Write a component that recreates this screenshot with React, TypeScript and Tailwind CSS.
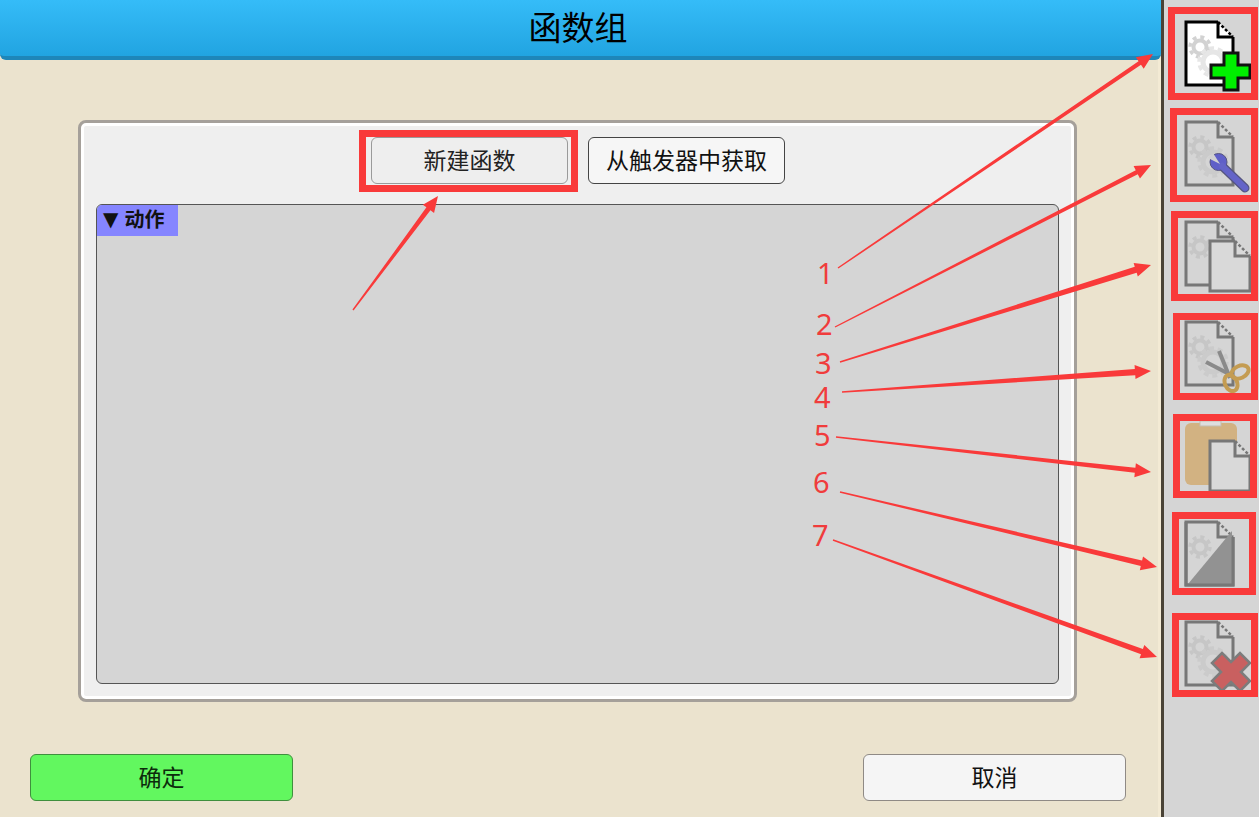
const FONT = "font-['Noto_Sans_CJK_SC','Noto_Sans',sans-serif]";

// annotation arrows: thin at the tail, thick near the head
function arrowPoints(x1: number, y1: number, x2: number, y2: number, shaft: number, head = 7, len = 16) {
  const d = Math.hypot(x2 - x1, y2 - y1);
  const ux = (x2 - x1) / d;
  const uy = (y2 - y1) / d;
  const nx = -uy;
  const ny = ux;
  const bx = x2 - ux * len;
  const by = y2 - uy * len;
  const tail = 0.7;
  const pts = [
    [x1 + nx * tail, y1 + ny * tail],
    [bx + nx * shaft, by + ny * shaft],
    [bx + nx * head, by + ny * head],
    [x2, y2],
    [bx - nx * head, by - ny * head],
    [bx - nx * shaft, by - ny * shaft],
    [x1 - nx * tail, y1 - ny * tail],
  ];
  return pts.map((p) => p.join(",")).join(" ");
}

const arrows = [
  [353, 310, 438, 196, 2.5],
  [838, 268, 1153, 54, 2.2],
  [835, 327, 1151, 165, 2.2],
  [840, 362, 1151, 265, 3.2],
  [842, 392, 1151, 371, 3.2],
  [836, 437, 1151, 472, 2.6],
  [840, 492, 1157, 567, 2.8],
  [833, 540, 1157, 657, 2.8],
];

const numbers = [
  { n: "1", cls: "left-[817px] top-[258px]" },
  { n: "2", cls: "left-[816px] top-[309px]" },
  { n: "3", cls: "left-[815px] top-[348px]" },
  { n: "4", cls: "left-[814px] top-[382px]" },
  { n: "5", cls: "left-[814px] top-[420px]" },
  { n: "6", cls: "left-[813px] top-[467px]" },
  { n: "7", cls: "left-[812px] top-[520px]" },
];

function Gears({ x, y, big = true, small = "#c6c6c6", large = "#cbcbcb" }: { x: number; y: number; big?: boolean; small?: string; large?: string }) {
  return (
    <g fill="none" className="blur-[0.6px]">
      <g stroke={small}>
        <circle cx={x} cy={y} r="6.5" strokeWidth="4" />
        <circle cx={x} cy={y} r="10" strokeWidth="3.5" strokeDasharray="4 3.85" />
      </g>
      {big && (
        <g stroke={large}>
          <circle cx={x + 13} cy={y + 15} r="10" strokeWidth="5" />
          <circle cx={x + 13} cy={y + 15} r="14" strokeWidth="3.5" strokeDasharray="5 3.8" />
        </g>
      )}
    </g>
  );
}

function Doc({ x, y, w = 47, h = 63, color = "#777777", fill = "none" }: { x: number; y: number; w?: number; h?: number; color?: string; fill?: string }) {
  const f = 15;
  return (
    <g fill="none" stroke={color} strokeWidth="3">
      <path d={`M${x} ${y}H${x + w - f}L${x + w} ${y + f}V${y + h}H${x}Z`} fill={fill} stroke="none" />
      <path d={`M${x + w - f} ${y}H${x}V${y + h}H${x + w}V${y + f}`} />
      <path d={`M${x + w - f} ${y}V${y + f}H${x + w}`} fill={fill === "none" ? "#d5d5d5" : fill} />
      <path d={`M${x + w - f} ${y}L${x + w} ${y + f}`} strokeWidth="2.5" strokeDasharray="3 2" />
    </g>
  );
}

function IconNew() {
  return (
    <>
      <Doc x={1186} y={22} color="#000000" fill="#ffffff" />
      <Gears x={1200} y={47} small="#d2d2d2" large="#e6e6e6" />
      <path
        d="M1224 53H1238V65H1250V78H1238V90H1224V78H1211V65H1224Z"
        fill="#00f000"
        stroke="#111111"
        strokeWidth="3"
      />
    </>
  );
}

function IconEdit() {
  return (
    <>
      <Doc x={1186} y={122} />
      <Gears x={1200} y={147} />
      <path d="M1222 166L1245 188" fill="none" stroke="#55557f" strokeWidth="9" strokeLinecap="round" />
      <circle cx="1218.5" cy="162" r="8.5" fill="#5f5fc8" stroke="#55557f" strokeWidth="1" />
      <path d="M1222 166L1245 188" fill="none" stroke="#6464c8" strokeWidth="6.5" strokeLinecap="round" />
      <path d="M1220 164L1213 153L1208 158Z" fill="#d0d0d0" />
    </>
  );
}

function IconCopy() {
  return (
    <>
      <Doc x={1186} y={222} />
      <Gears x={1200} y={247} big={false} />
      <Doc x={1210} y={241} w={40} h={50} fill="#d9d9d9" />
    </>
  );
}

function IconCut() {
  return (
    <>
      <Doc x={1186} y={322} />
      <Gears x={1200} y={347} />
      <g fill="none">
        <path d="M1219 351L1230 378" stroke="#8a8a8a" strokeWidth="4" />
        <path d="M1206 362L1231 375" stroke="#8a8a8a" strokeWidth="4" />
        <ellipse cx="1240" cy="372" rx="9" ry="6" stroke="#c49c52" strokeWidth="4" transform="rotate(-25 1240 372)" />
        <ellipse cx="1231" cy="383" rx="6" ry="8.5" stroke="#c49c52" strokeWidth="4" transform="rotate(-25 1231 383)" />
      </g>
    </>
  );
}

function IconPaste() {
  return (
    <>
      <rect x="1185" y="423" width="52" height="62" rx="6" fill="#d2b282" />
      <rect x="1200" y="421" width="21" height="5" fill="#dedede" stroke="#c3bdb0" />
      <Doc x={1210} y={441} w={40} h={50} fill="#d9d9d9" />
    </>
  );
}

function IconHalf() {
  return (
    <>
      <Doc x={1186} y={522} />
      <Gears x={1200} y={547} big={false} />
      <path d="M1188 584L1232 531V584Z" fill="#929292" />
      <path d="M1186 522V585H1233V537" fill="none" stroke="#777777" strokeWidth="3" />
    </>
  );
}

function IconDelete() {
  return (
    <>
      <Doc x={1186} y={622} />
      <Gears x={1200} y={647} />
      <path
        d="M1222 653L1231 662L1240 653L1250 663L1241 672L1250 681L1240 691L1231 682L1222 691L1212 681L1221 672L1212 663Z"
        fill="#c96060"
        stroke="#7c7c7c"
        strokeWidth="2.5"
      />
    </>
  );
}

const tools = [
  { cls: "ml-[4px] w-[90px] h-[93px]", box: "1175 14 76 79", Icon: IconNew },
  { cls: "ml-[6px] mt-[8px] w-[88px] h-[94px]", box: "1177 115 74 80", Icon: IconEdit },
  { cls: "ml-[7px] mt-[9px] w-[87px] h-[90px]", box: "1178 218 73 76", Icon: IconCopy },
  { cls: "ml-[9px] mt-[12px] w-[85px] h-[87px]", box: "1180 320 71 73", Icon: IconCut },
  { cls: "ml-[9px] mt-[14px] w-[84px] h-[84px]", box: "1180 421 70 70", Icon: IconPaste },
  { cls: "ml-[8px] mt-[14px] w-[84px] h-[83px]", box: "1179 519 70 69", Icon: IconHalf },
  { cls: "ml-[8px] mt-[18px] w-[86px] h-[84px]", box: "1179 620 72 70", Icon: IconDelete },
];

export default function App() {
  return (
    <div className={`relative flex h-[817px] w-[1259px] overflow-hidden bg-[#ebe3ce] ${FONT} text-[#111111]`}>
      {/* dialog */}
      <div className="flex w-[1161px] flex-col border-r-[3px] border-[#f3ead4]">
        <div className="-mr-[3px] flex h-[60px] items-center justify-center rounded-b-md border-b-[4px] border-[#1e86b9] bg-gradient-to-b from-[#35bcf8] to-[#21a4e1] pb-[3px] pr-[5px] text-[33px] leading-none text-black">
          函数组
        </div>

        <div className="ml-[78px] mt-[60px] flex h-[582px] w-[999px] flex-col rounded-lg border-[3px] border-[#a5a09a] bg-[#efefef] px-[15px] pt-[14px] shadow-[inset_0_0_0_3px_#ffffff]">
          <div className="flex justify-center gap-[20px] pl-[1px]">
            <div className="relative flex h-[47px] w-[197px] items-center justify-center rounded-md border border-[#9a9a9a] bg-[#eeeeee] pb-[3px] text-[23px] leading-none text-[#222222]">
              新建函数
              <div className="absolute -left-[13px] -top-[8px] h-[62px] w-[219px] border-[7px] border-[#f93a3a]" />
            </div>
            <div className="flex h-[47px] w-[197px] items-center justify-center rounded-md border border-[#444444] bg-[#f6f6f6] pb-[3px] text-[23px] leading-none text-[#111111]">
              从触发器中获取
            </div>
          </div>
          <div className="mt-[20px] h-[480px] w-[963px] overflow-hidden rounded-md border border-[#555555] bg-[#d5d5d5]">
            <div className="flex h-[31px] w-[81px] items-center gap-[6px] bg-[#8585ff] pb-[4px] pl-[6px] text-[20px] font-bold leading-none text-[#111111]">
              <span className="font-['DejaVu_Sans',sans-serif] text-[20px]">▼</span>
              <span>动作</span>
            </div>
          </div>
        </div>

        <div className="ml-[30px] mt-[52px] flex w-[1096px] justify-between">
          <div className="flex h-[47px] w-[263px] items-center justify-center rounded-md border border-[#3f8f3d] bg-[#62f75f] pb-[3px] text-[23px] leading-none text-[#0c2b0c]">
            确定
          </div>
          <div className="flex h-[47px] w-[263px] items-center justify-center rounded-md border border-[#8f8a85] bg-[#f5f5f5] pb-[3px] text-[23px] leading-none text-[#111111]">
            取消
          </div>
        </div>
      </div>

      {/* tool strip */}
      <div className="flex w-[98px] flex-col items-start border-l-[3px] border-[#4a4336] bg-[#d5d5d5] pt-[7px]">
        {tools.map(({ cls, box, Icon }) => (
          <div key={box} className={`${cls} border-[7px] border-[#f93a3a]`}>
            <svg viewBox={box} className="h-full w-full">
              <Icon />
            </svg>
          </div>
        ))}
      </div>

      {/* annotations */}
      <svg className="absolute left-0 top-0 h-[817px] w-[1259px]" viewBox="0 0 1259 817">
        {arrows.map((a) => (
          <polygon key={a.join()} points={arrowPoints(a[0], a[1], a[2], a[3], a[4])} fill="#f93a3a" />
        ))}
      </svg>
      {numbers.map(({ n, cls }) => (
        <span key={n} className={`absolute ${cls} font-['Noto_Sans',sans-serif] text-[29px] leading-[30px] text-[#f03c3c]`}>
          {n}
        </span>
      ))}
    </div>
  );
}
